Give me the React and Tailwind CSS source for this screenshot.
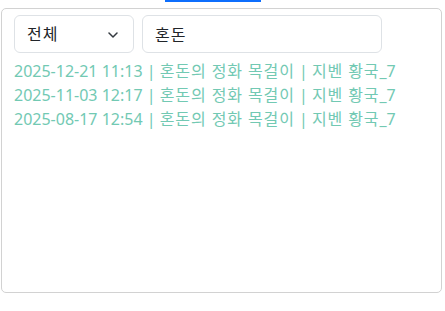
import React, { useState } from 'react';

const rows = [
  { date: '2025-12-21 11:13', item: '혼돈의 정화 목걸이', server: '지벤 황국', ch: '_7' },
  { date: '2025-11-03 12:17', item: '혼돈의 정화 목걸이', server: '지벤 황국', ch: '_7' },
  { date: '2025-08-17 12:54', item: '혼돈의 정화 목걸이', server: '지벤 황국', ch: '_7' },
];

export default function App() {
  const [query, setQuery] = useState('혼돈');
  const [kind, setKind] = useState('전체');

  return (
    <div className="w-[445px] h-[311px] bg-white font-['Noto_Sans','Noto_Sans_CJK_KR',sans-serif] text-[16px] leading-[24px]">
      {/* active tab underline */}
      <div className="h-[8px]">
        <div className="ml-[165px] w-[96px] h-[2px] bg-[#0d6efd]" />
      </div>

      <div className="ml-[1px] w-[441px] h-[285px] border border-[#d2d2d2] rounded-[5px] px-[12px] pt-[6px]">
        <div className="flex gap-[8px]">
          <div className="relative w-[120px] h-[38px]">
            <select
              value={kind}
              onChange={(e) => setKind(e.target.value)}
              className="appearance-none w-full h-full border border-[#dee2e6] rounded-[6px] pl-[12px] pr-[36px] text-[#212529] bg-white outline-none tracking-[1px]"
            >
              <option>전체</option>
              <option>제작</option>
              <option>획득</option>
            </select>
            <svg
              className="absolute right-[16px] top-[17px] pointer-events-none"
              width="10"
              height="6"
              viewBox="0 0 10 6"
              fill="none"
              stroke="#343a40"
              strokeWidth="1.5"
              strokeLinecap="round"
              strokeLinejoin="round"
            >
              <path d="M1 1l4 4 4-4" />
            </svg>
          </div>
          <input
            value={query}
            onChange={(e) => setQuery(e.target.value)}
            className="w-[240px] h-[38px] border border-[#dee2e6] rounded-[6px] px-[12px] text-[#212529] outline-none tracking-[1px]"
          />
        </div>

        <div className="mt-[6px] text-[#72c9b3]">
          {rows.map((r, i) => (
            <div key={i} className="whitespace-nowrap">
              {r.date} | <span className="tracking-[0.9px]">{r.item}</span> | <span className="tracking-[0.9px]">{r.server}</span>{r.ch}
            </div>
          ))}
        </div>
      </div>
    </div>
  );
}
